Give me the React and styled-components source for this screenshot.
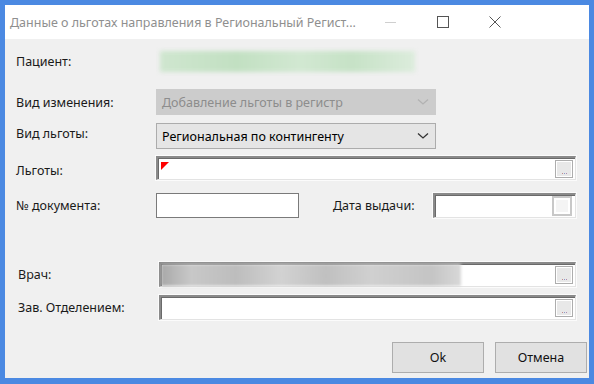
import styled, { createGlobalStyle } from 'styled-components';

const Global = createGlobalStyle`
    html, body { margin: 0; padding: 0; background: #4b89e2; }
    body { font-family: "Noto Sans", "Open Sans", sans-serif; font-size: 12px; }
`;

const Window = styled.div`
    width: 594px;
    height: 384px;
    box-sizing: border-box;
    border: 5px solid #4b89e2;
    border-bottom-width: 6px;
    background: #f0f0f0;
    display: flex;
    flex-direction: column;
`;

const TitleBar = styled.div`
    height: 34px;
    background: #fff;
    display: flex;
    align-items: center;
    padding-left: 5px;
    padding-right: 68px;
    flex-shrink: 0;
`;

const Title = styled.div`
    flex: 1;
    font-size: 12.5px;
    color: #8f8f8f;
    white-space: nowrap;
    padding-top: 1px;
`;

const Caption = styled.div`
    width: 52px;
    height: 34px;
    display: flex;
    align-items: center;
    justify-content: center;
`;

const Body = styled.div`
    flex: 1;
    padding: 0 0 0 11px;
    display: flex;
    flex-direction: column;
`;

const Row = styled.div`
    display: flex;
    align-items: center;
    height: ${p => p.$h}px;
    margin-top: ${p => p.$top}px;
    padding-left: ${p => p.$pad || 0}px;
`;

const Label = styled.div`
    width: ${p => p.$w || 140}px;
    flex-shrink: 0;
    color: #1a1a1a;
    font-size: 12.5px;
    white-space: nowrap;
    margin-top: ${p => p.$dy || 0}px;
`;

const Blur = styled.div`
    width: ${p => p.$w}px;
    height: 21px;
    margin-left: 4px;
    background: ${p => p.$bg};
    filter: blur(2px);
`;

const Combo = styled.div`
    width: 280px;
    height: 26px;
    box-sizing: border-box;
    border: 1px solid ${p => (p.$disabled ? '#cccccc' : '#acacac')};
    background: ${p => (p.$disabled ? '#cccccc' : '#e5e5e5')};
    color: ${p => (p.$disabled ? '#8d8d8d' : '#000')};
    display: flex;
    align-items: center;
    padding-left: 5px;
    font-size: 12.5px;
`;

const ComboText = styled.div`
    flex: 1;
    white-space: nowrap;
`;

const Sunken = styled.div`
    width: ${p => p.$w}px;
    height: ${p => p.$h || 24}px;
    box-sizing: border-box;
    background: #fff;
    border-top: 2px solid #8a8a8a;
    border-left: 2px solid #8a8a8a;
    border-right: 1px solid #e3e3e3;
    border-bottom: 1px solid #e3e3e3;
    box-shadow: inset 1px 1px 0 #6a6a6a, 0 0 0 1px #fbfbfb;
    display: flex;
    align-items: center;
    justify-content: space-between;
    position: relative;
`;

const Plain = styled.div`
    width: 143px;
    height: 25px;
    box-sizing: border-box;
    background: #fff;
    border: 1px solid #7a7a7a;
`;

const Marker = styled.div`
    position: absolute;
    left: 3px;
    top: 4px;
    width: 0;
    height: 0;
    border-top: 8px solid #ff0000;
    border-right: 8px solid transparent;
`;

const Filler = styled.div`
    width: ${p => p.$w}px;
    height: 22px;
    background: linear-gradient(90deg, #a8a8a8 0%, #c8c8c8 10%, #bdbdbd 25%, #d2d2d2 40%, #c0c0c0 55%, #d0d0d0 70%, #c4c4c4 90%, #d8d8d8 100%);
    filter: blur(1.5px);
`;

const Dots = styled.div`
    width: 18px;
    height: 18px;
    margin-right: 2px;
    box-sizing: border-box;
    border: 1px solid #adadad;
    background: #e8e8e8;
    box-shadow: inset 1px 1px 0 #fff, inset -1px -1px 0 #fff;
    display: flex;
    align-items: flex-end;
    justify-content: center;
    gap: 1px;
    padding-bottom: 3px;
`;

const Dot = styled.span`
    width: 1px;
    height: 1px;
    background: ${p => p.$c};
`;

const Check = styled.div`
    width: 20px;
    height: 20px;
    margin-right: 3px;
    box-sizing: border-box;
    border: 2px solid #c8c8c8;
    background: #f4f4f4;
    box-shadow: inset 0 0 0 2px #fff;
`;

const Spacer = styled.div`
    width: ${p => p.$w}px;
    flex-shrink: 0;
`;

const Buttons = styled.div`
    display: flex;
    justify-content: flex-end;
    gap: 11px;
    padding-right: 2px;
    margin-top: 22px;
`;

const Button = styled.button`
    width: 92px;
    height: 31px;
    box-sizing: border-box;
    border: 1px solid #adadad;
    background: #e1e1e1;
    font-family: inherit;
    font-size: 12.5px;
    color: #111;
    padding: 0;
`;

const Chevron = ({ color }) => (
    <svg width="12" height="8" viewBox="0 0 12 8" style={{ marginRight: 6 }}>
        <path d="M1 1.5 L6 6 L11 1.5" fill="none" stroke={color} strokeWidth="1.3" />
    </svg>
);

const Ellipsis = () => (
    <Dots>
        <Dot $c="#c08a8a" />
        <Dot $c="#8a9ac8" />
        <Dot $c="#b08ab0" />
    </Dots>
);

const App = () => {
    return (
        <>
            <Global />
            <Window>
                <TitleBar>
                    <Title>Данные о льготах направления в Региональный Регист...</Title>
                    <Caption>
                        <svg width="12" height="12" viewBox="0 0 12 12">
                            <path d="M0 6.5 H11" stroke="#cfcfcf" strokeWidth="1" />
                        </svg>
                    </Caption>
                    <Caption>
                        <svg width="12" height="12" viewBox="0 0 12 12">
                            <rect x="0.5" y="0.5" width="11" height="11" fill="none" stroke="#555" />
                        </svg>
                    </Caption>
                    <Caption>
                        <svg width="12" height="12" viewBox="0 0 12 12">
                            <path d="M0.5 0.5 L11.5 11.5 M11.5 0.5 L0.5 11.5" stroke="#555" strokeWidth="1" />
                        </svg>
                    </Caption>
                </TitleBar>
                <Body>
                    <Row $h={21} $top={12}>
                        <Label $w={140}>Пациент:</Label>
                        <Blur $w={255} $bg="linear-gradient(90deg, #cfe6cf 0%, #c2e0c2 30%, #d2e8d2 55%, #c6e2c6 75%, #dcecdc 100%)" />
                    </Row>
                    <Row $h={26} $top={17}>
                        <Label $w={140} $dy={1}>Вид изменения:</Label>
                        <Combo $disabled>
                            <ComboText>Добавление льготы в регистр</ComboText>
                            <Chevron color="#b2b2b2" />
                        </Combo>
                    </Row>
                    <Row $h={26} $top={8}>
                        <Label $w={140} $dy={-5}>Вид льготы:</Label>
                        <Combo>
                            <ComboText>Региональная по контингенту</ComboText>
                            <Chevron color="#333" />
                        </Combo>
                    </Row>
                    <Row $h={24} $top={7}>
                        <Label $w={140} $dy={4}>Льготы:</Label>
                        <Sunken $w={420}>
                            <Marker />
                            <span />
                            <Ellipsis />
                        </Sunken>
                    </Row>
                    <Row $h={25} $top={13}>
                        <Label $w={140}>№ документа:</Label>
                        <Plain />
                        <Spacer $w={34} />
                        <Label $w={100}>Дата выдачи:</Label>
                        <Sunken $w={143} $h={25}>
                            <span />
                            <Check />
                        </Sunken>
                    </Row>
                    <Row $h={25} $top={44} $pad={2}>
                        <Label $w={141}>Врач:</Label>
                        <Sunken $w={417} $h={25}>
                            <Filler $w={300} />
                            <Ellipsis />
                        </Sunken>
                    </Row>
                    <Row $h={25} $top={8} $pad={2}>
                        <Label $w={141}>Зав. Отделением:</Label>
                        <Sunken $w={417} $h={25}>
                            <span />
                            <Ellipsis />
                        </Sunken>
                    </Row>
                    <Buttons>
                        <Button>Ok</Button>
                        <Button>Отмена</Button>
                    </Buttons>
                </Body>
            </Window>
        </>
    );
};

export default App;
